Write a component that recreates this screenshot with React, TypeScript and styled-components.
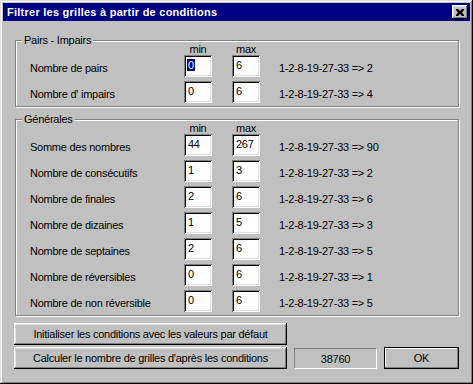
import styled, { createGlobalStyle } from "styled-components";

const GlobalStyle = createGlobalStyle`
	html, body {
		margin: 0;
		padding: 0;
		background: #c0c0c0;
	}
	* {
		box-sizing: border-box;
	}
`;

type Row = {
	label: string;
	min: string;
	max: string;
	result: string;
	selected?: boolean;
};

const pairs: Row[] = [
	{ label: "Nombre de pairs", min: "0", max: "6", result: "2", selected: true },
	{ label: "Nombre d' impairs", min: "0", max: "6", result: "4" },
];

const generales: Row[] = [
	{ label: "Somme des nombres", min: "44", max: "267", result: "90" },
	{ label: "Nombre de consécutifs", min: "1", max: "3", result: "2" },
	{ label: "Nombre de finales", min: "2", max: "6", result: "6" },
	{ label: "Nombre de dizaines", min: "1", max: "5", result: "3" },
	{ label: "Nombre de septaines", min: "2", max: "6", result: "5" },
	{ label: "Nombre de réversibles", min: "0", max: "6", result: "1" },
	{ label: "Nombre de non réversible", min: "0", max: "6", result: "5" },
];

const Group = ({ title, rows }: { title: string; rows: Row[] }) => (
	<GroupBox>
		<Legend>{title}</Legend>
		<Grid>
			<span />
			<ColHead>min</ColHead>
			<ColHead>max</ColHead>
			<span />
			{rows.map((r) => (
				<RowParts key={r.label} row={r} />
			))}
		</Grid>
	</GroupBox>
);

const RowParts = ({ row }: { row: Row }) => (
	<>
		<Label>{row.label}</Label>
		<Field>{row.selected ? <Selected>{row.min}</Selected> : row.min}</Field>
		<Field>{row.max}</Field>
		<Result>1-2-8-19-27-33 =&gt; {row.result}</Result>
	</>
);

const App = () => {
	return (
		<>
			<GlobalStyle />
			<Window>
				<TitleBar>
					<Title>Filtrer les grilles à partir de conditions</Title>
					<CloseButton>
						<svg width="8" height="7" viewBox="0 0 8 7">
							<path
								d="M0 0h2l2 2 2-2h2v1l-2 2.5 2 2.5v1h-2l-2-2-2 2h-2v-1l2-2.5-2-2.5z"
								fill="#000"
							/>
						</svg>
					</CloseButton>
				</TitleBar>
				<Body>
					<Group title="Pairs - Impairs" rows={pairs} />
					<Group title="Générales" rows={generales} />
					<Footer>
						<ButtonStack>
							<Button>Initialiser les conditions avec les valeurs par défaut</Button>
							<Button>Calculer le nombre de grilles d'après les conditions</Button>
						</ButtonStack>
						<Count>38760</Count>
						<OkButton>OK</OkButton>
					</Footer>
				</Body>
			</Window>
		</>
	);
};

export default App;

const Window = styled.div`
	width: 473px;
	height: 384px;
	padding: 3px;
	background: #c0c0c0;
	font-family: "Liberation Sans", Arial, sans-serif;
	font-size: 11px;
	letter-spacing: -0.25px;
	color: #000;
	box-shadow: inset -1px -1px 0 #000, inset 1px 1px 0 #dfdfdf,
		inset -2px -2px 0 #808080, inset 2px 2px 0 #fff;
	display: flex;
	flex-direction: column;
`;

const TitleBar = styled.div`
	height: 18px;
	background: #000080;
	display: flex;
	align-items: center;
	justify-content: space-between;
	padding: 0 2px 0 4px;
`;

const Title = styled.span`
	color: #fff;
	font-weight: bold;
	font-size: 11px;
	letter-spacing: 0.25px;
`;

const CloseButton = styled.div`
	width: 16px;
	height: 14px;
	background: #c0c0c0;
	display: flex;
	align-items: center;
	justify-content: center;
	box-shadow: inset -1px -1px 0 #000, inset 1px 1px 0 #fff,
		inset -2px -2px 0 #808080, inset 2px 2px 0 #dfdfdf;
`;

const Body = styled.div`
	flex: 1;
	display: flex;
	flex-direction: column;
	padding: 19px 11px 0 12px;
	gap: 12px;
`;

const GroupBox = styled.div`
	position: relative;
	border: 1px solid #808080;
	box-shadow: inset 1px 1px 0 #fff, 1px 1px 0 #fff;
	padding: 0 0 3px 14px;
`;

const Legend = styled.span`
	position: absolute;
	top: -7px;
	left: 6px;
	padding: 0 2px;
	background: #c0c0c0;
	line-height: 13px;
`;

const Grid = styled.div`
	display: grid;
	grid-template-columns: 134px 28px 28px 1fr;
	grid-template-rows: 10px;
	grid-auto-rows: 22px;
	column-gap: 20px;
	row-gap: 4px;
`;

const ColHead = styled.div`
	align-self: end;
	text-align: center;
	line-height: 12px;
	margin-bottom: -4px;
`;

const Label = styled.div`
	padding-top: 7px;
	line-height: 13px;
	white-space: nowrap;
`;

const Result = styled(Label)`
	margin-left: -1px;
`;

const Field = styled.div`
	background: #fff;
	padding: 4px 0 0 4px;
	line-height: 12px;
	box-shadow: inset 1px 1px 0 #808080, inset -1px -1px 0 #fff,
		inset 2px 2px 0 #000, inset -2px -2px 0 #dfdfdf;
`;

const Selected = styled.span`
	background: #000080;
	color: #fff;
	padding: 0 1px;
	margin-left: -1px;
`;

const Footer = styled.div`
	display: flex;
	align-items: flex-end;
	margin: -5px 0 0 -1px;
	gap: 7px;
`;

const ButtonStack = styled.div`
	display: flex;
	flex-direction: column;
	gap: 2px;
`;

const Button = styled.div`
	width: 273px;
	height: 22px;
	display: flex;
	align-items: center;
	justify-content: center;
	background: #c0c0c0;
	box-shadow: inset -1px -1px 0 #000, inset 1px 1px 0 #fff,
		inset -2px -2px 0 #808080, inset 2px 2px 0 #dfdfdf;
`;

const Count = styled.div`
	width: 83px;
	height: 21px;
	display: flex;
	align-items: center;
	justify-content: center;
	border: 1px solid;
	border-color: #808080 #fff #fff #808080;
`;

const OkButton = styled(Button)`
	width: 75px;
	border: 1px solid #000;
	box-shadow: inset -1px -1px 0 #808080, inset 1px 1px 0 #fff;
`;
